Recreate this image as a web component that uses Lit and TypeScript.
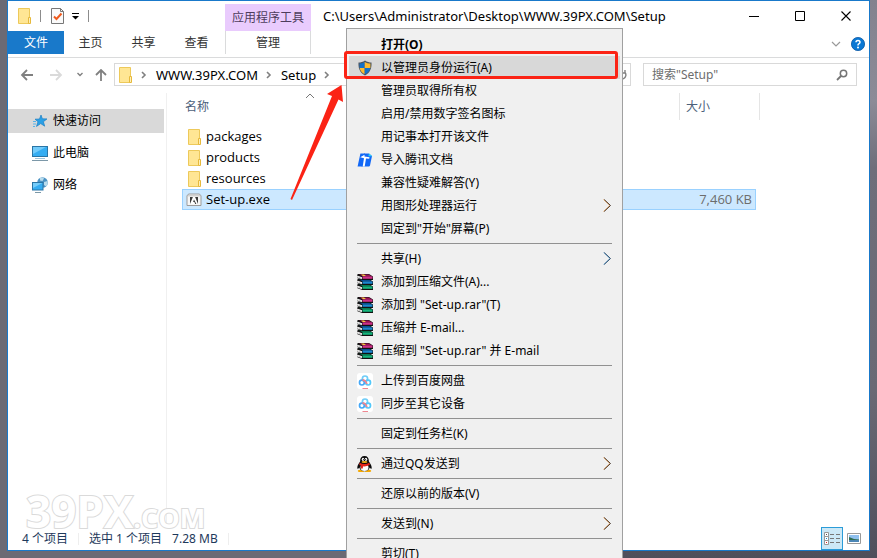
import { LitElement, html, svg, css, nothing, type TemplateResult } from "lit";
import { customElement } from "lit/decorators.js";
import { classMap } from "lit/directives/class-map.js";

const folder = html`<svg width="14" height="16" viewBox="0 0 14 16" aria-hidden="true">
  <path d="M.5.5h11v15H.5z" fill="#ffe694" stroke="#edc95a" />
  <path d="M10.500 9.500h2v6h-2z" fill="#fff0b8" stroke="#e6b93c" />
</svg>`;

const crumb = html`<svg class="crumb-sep" width="6" height="8" viewBox="0 0 6 8" aria-hidden="true">
  <path d="M1 1l3 3-3 3" fill="none" stroke="#808080" stroke-width="1.600" />
</svg>`;

const arrow = (edge: string, core: string) => html`<svg class="sub" width="9" height="14" viewBox="0 0 9 14" aria-hidden="true">
  <path d="M.5 .5L6.800 6.500l-6.300 6" fill="none" stroke=${edge} stroke-width=".8" />
  <path d="M1.200 .5L7.500 6.500l-6.300 6" fill="none" stroke=${core} stroke-width=".9" />
</svg>`;

const submenu = arrow("#e79a4c", "#3b2a20");
const submenuBlue = arrow("#6fa9d6", "#1f3f5f");

const shield = html`<svg width="16" height="16" viewBox="0 0 16 16" aria-hidden="true">
  <path d="M8 .5C10 2 12.500 2.600 14.500 2.600 14.800 8 13.500 12.500 8 15.500 2.500 12.500 1.200 8 1.500 2.600 3.500 2.600 6 2 8 .5z" fill="#4c5560" />
  <path d="M7.700 2C6 3 4.300 3.500 2.600 3.600V8h5.100z" fill="#1271c9" />
  <path d="M7.700 2c2 1 4 1.500 5.700 1.600V8H7.700z" fill="#fdbb2f" />
  <path d="M2.700 8h5v6.200c-3-1.700-4.600-3.600-5-6.200z" fill="#fdbb2f" />
  <path d="M13.300 8H7.700v6.200c3.600-1.700 5.200-3.600 5.600-6.200z" fill="#1271c9" />
</svg>`;

const docs = html`<svg width="16" height="16" viewBox="0 0 16 16" aria-hidden="true">
  <path d="M3.400 1.500H8L5.500 14.500H.6z" fill="#1268f6" />
  <path d="M7 1.500h5l3 2.500-2 9.500q-.2 1-1.200 1H4.600z" fill="#1268f6" />
  <path d="M12 1.500l3.200 2.800h-3.800z" fill="#27d7f5" />
  <path d="M3.200 5.300l4.300-2.500V4.500l5 .8-.3 1.500-3.200-.4-1.300 8.100H5.700l1.300-8.300z" fill="#fff" />
</svg>`;

const book = (y: number, dark: string, bright: string) => svg`<g transform="translate(0 ${y})">
  <path d="M1 0h11l4 2.500V6H5L0 4V1z" fill="#111" />
  <path d="M2 .4h9.800l3.200 2H6z" fill=${dark} />
  <path d="M5.500 2.400h10v2.400h-10z" fill=${bright} />
  <path d="M0 1.400l5 1.900v2L0 3.600z" fill="#fff" />
  <path d="M0 2.600l5 1.800" stroke="#777" stroke-width=".4" />
</g>`;

const rar = html`<svg width="16" height="16" viewBox="0 0 16 16" aria-hidden="true">
  ${book(10, "#067a52", "#14b57c")}${book(5, "#0a4f93", "#1a86cf")}${book(0, "#9c0f52", "#cf2f88")}
  <path d="M4 .500h3l2 1.500H6z" fill="#f2cd3c" />
</svg>`;

const cloud = html`<svg width="16" height="16" viewBox="0 0 16 16" aria-hidden="true">
  <rect width="16" height="16" rx="3" fill="#fff" />
  <circle cx="8" cy="5.600" r="2.600" fill="none" stroke="#6fcdf8" stroke-width="1.700" />
  <circle cx="4.900" cy="9.600" r="2.400" fill="none" stroke="#45a8f7" stroke-width="1.700" />
  <circle cx="11.100" cy="9.600" r="2.400" fill="none" stroke="#52c8fa" stroke-width="1.700" />
  <path d="M5.300 7.200Q8 6.300 10 11" fill="none" stroke="#f0848e" stroke-width="1.700" />
  <path d="M5.500 15.500h5.500" stroke="#ef8790" />
</svg>`;

const penguin = html`<svg width="16" height="16" viewBox="0 0 16 16" aria-hidden="true">
  <ellipse cx="4" cy="15" rx="3.200" ry="1.200" fill="#f5a800" /><ellipse cx="11" cy="15" rx="3.200" ry="1.200" fill="#f5a800" />
  <path d="M7.500 0C4.400 0 3 2.200 3.100 5.500 1.500 7.500-.3 10.800.5 12.800c.7.3 1.300-.8 1.800-1.300C3 14 5 15.300 7.500 15.300s4.500-1.300 5.200-3.800c.5.500 1.100 1.600 1.800 1.300.8-2-1-5.300-2.600-7.300C12 2.200 10.600 0 7.500 0z" fill="#0b0b0b" />
  <ellipse cx="7.500" cy="11.500" rx="4" ry="3.500" fill="#fff" />
  <path d="M2.600 6.800Q7.500 9.300 12.400 6.800l.4 2.200Q8.500 11 6 10.300l-.2 2.300-2-.2.200-2.700-1.700-.7z" fill="#e3231a" />
  <ellipse cx="6" cy="3.300" rx="1.200" ry="1.600" fill="#fff" /><ellipse cx="9" cy="3.300" rx="1.200" ry="1.600" fill="#fff" />
  <circle cx="6.400" cy="3.500" r=".5" /><circle cx="8.600" cy="3.500" r=".5" />
  <ellipse cx="7.500" cy="6" rx="3" ry=".9" fill="#f7b21a" />
</svg>`;

const adobe = html`<svg width="16" height="16" viewBox="0 0 16 16" aria-hidden="true">
  <path d="M2.500 2h11l1 1.500h.500v10h-14v-10h.500z" fill="#f6f6f6" stroke="#9b9b9b" />
  <path d="M1.500 3.800h13" stroke="#c4c4c4" /><rect x="4" y="5" width="8" height="7" fill="#3b3b3b" />
  <path d="M4 12L6.900 5h2.200l2.900 7h-1.600L8 7.600 7.100 10h1.300l.8 2z" fill="#fff" />
</svg>`;

const star = html`<svg width="16" height="16" viewBox="0 0 16 16" aria-hidden="true">
  <path d="M9 2l1.400 3.800 4.600.1-3.600 2.800 1.300 4.500-4-2.600-4.200 2.800 1.500-4.700L3 6.200l4.500-.2z" fill="#2aa0e6" stroke="#1d7fc4" stroke-width=".7" />
  <path d="M1 8.500h3M1 11h3M1 13.500h2" stroke="#57b4ea" />
</svg>`;

const pc = html`<svg width="16" height="16" viewBox="0 0 16 16" aria-hidden="true">
  <rect x=".5" y="1.500" width="15" height="10" fill="#35adf2" stroke="#2a75a5" />
  <path d="M1 2h13L1 9z" fill="#72cbfa" /><path d="M3 13.500h10" stroke="#9fc4da" /><path d="M0 15.500h16" stroke="#7c98a8" />
</svg>`;

const network = html`<svg width="16" height="16" viewBox="0 0 16 16" aria-hidden="true">
  <circle cx="10.500" cy="5.500" r="5.300" fill="#4c93c4" />
  <path d="M8 .9q3-1.200 4 .6L10.500 4 8 3.500zM12 5l3.500-1q.8 3-1.500 5.500L12 8z" fill="#b9dced" />
  <rect x=".5" y="5.500" width="10.500" height="7.500" fill="#35adf2" stroke="#2a75a5" />
  <path d="M1 6h9.500L1 11z" fill="#76cdfa" /><path d="M3 15.500h6" stroke="#7c98a8" />
</svg>`;

interface Item {
  label: string;
  icon?: TemplateResult;
  sub?: TemplateResult;
  bold?: boolean;
  active?: boolean;
}

const groups: Item[][] = [
  [
    { label: "打开(O)", bold: true },
    { label: "以管理员身份运行(A)", icon: shield, active: true },
    { label: "管理员取得所有权" },
    { label: "启用/禁用数字签名图标" },
    { label: "用记事本打开该文件" },
    { label: "导入腾讯文档", icon: docs },
    { label: "兼容性疑难解答(Y)" },
    { label: "用图形处理器运行", sub: submenu },
    { label: "固定到\"开始\"屏幕(P)" },
  ],
  [
    { label: "共享(H)", sub: submenuBlue },
    { label: "添加到压缩文件(A)...", icon: rar },
    { label: "添加到 \"Set-up.rar\"(T)", icon: rar },
    { label: "压缩并 E-mail...", icon: rar },
    { label: "压缩到 \"Set-up.rar\" 并 E-mail", icon: rar },
  ],
  [
    { label: "上传到百度网盘", icon: cloud },
    { label: "同步至其它设备", icon: cloud },
  ],
  [{ label: "固定到任务栏(K)" }],
  [{ label: "通过QQ发送到", icon: penguin, sub: submenu }],
  [{ label: "还原以前的版本(V)" }],
  [{ label: "发送到(N)", sub: submenu }],
  [{ label: "剪切(T)" }],
];

@customElement("context-menu")
class ContextMenu extends LitElement {
  static styles = css`
    :host {
      display: block;
      box-sizing: border-box;
      padding: 4px 2px;
      background: #f0f0f0;
      border: 1px solid #a0a0a0;
      font: 12px/16px "Noto Sans", "Noto Sans CJK SC", sans-serif;
    }
    svg { display: block; flex: none; }
    .item {
      display: flex;
      align-items: center;
      width: 100%;
      height: 23px;
      padding: 0 8px;
      border: 0;
      background: none;
      color: #000;
      font: inherit;
      text-align: left;
      white-space: nowrap;
    }
    .active { background: #d8d8d8; }
    .bold { font-weight: bold; }
    .icon { width: 24px; flex: none; }
    .label { flex: 1; }
    hr {
      height: 1px;
      margin: 3px 8px;
      border: 0;
      background: #919191;
    }
  `;

  render() {
    return html`<div role="menu">
      ${groups.map(
        (group, i) => html`${i ? html`<hr />` : nothing}${group.map(
          (it) => html`<button
            role="menuitem"
            class=${classMap({ item: true, active: !!it.active, bold: !!it.bold })}
          ><span class="icon">${it.icon ?? nothing}</span><span class="label">${it.label}</span>${it.sub ?? nothing}</button>`,
        )}`,
      )}
    </div>`;
  }
}

@customElement("app-root")
class AppRoot extends LitElement {
  static styles = css`
    :host {
      display: block;
      font: 12px/16px "Noto Sans", "Noto Sans CJK SC", sans-serif;
      color: #000;
    }
    * { box-sizing: border-box; }
    svg { display: block; flex: none; }
    button { padding: 0; border: 0; background: none; color: inherit; font: inherit; }
    .desktop {
      position: relative;
      display: flex;
      height: 100vh;
      padding: 0 7px 7px;
      overflow: hidden;
      background: linear-gradient(90deg, #6b6a74 0 50%, transparent 50%),
        linear-gradient(#83828e, #8c8b97 18%, #6f6e7a 30%, #6a6974 70%, #504f5b);
    }
    .window {
      display: flex;
      flex: 1;
      flex-direction: column;
      min-width: 0;
      background: #fff;
      border: 1px solid #1979ca;
    }
    .titlebar { display: flex; height: 30px; }
    .quick { display: flex; align-items: center; gap: 8px; width: 217px; padding-left: 10px; }
    .bar { width: 1px; height: 12px; background: #8c8c8c; }
    .tools {
      width: 86px;
      margin-top: 3px;
      background: #e9cbfd;
      color: #4d3d5c;
      line-height: 27px;
      text-align: center;
    }
    .title { flex: 1; min-width: 0; margin: 0; padding-left: 12px; overflow: hidden; font-size: 13px; font-weight: normal; line-height: 30px; white-space: nowrap; }
    .caption { display: grid; width: 46px; place-items: center; }
    .ribbon { display: flex; height: 27px; border-bottom: 1px solid #dadbdc; }
    .tab { width: 53px; height: 23px; color: #333; text-align: center; }
    .file { width: 56px; background: #1979ca; color: #fff; }
    .manage { width: 86px; margin-left: 2px; border: solid #dadbdc; border-width: 0 1px; }
    .ribbon-end { display: flex; align-items: center; gap: 10px; margin-left: auto; padding-right: 4px; }
    .nav { display: flex; align-items: center; padding: 5px 12px 6px; }
    .arrows { display: flex; align-items: center; width: 94px; }
    .arrows button { display: grid; place-items: center; width: 14px; }
    .back { margin-right: 15px; }
    .forward { margin-right: 10px; }
    .recent { margin-right: 7px; }
    .address { display: flex; flex: 1; align-items: center; height: 23px; padding-left: 4px; border: 1px solid #d9d9d9; font-size: 13px; }
    .crumb-sep { margin: 0 9px 0 8px; }
    .refresh { margin-left: auto; margin-right: 3px; }
    .search { display: flex; align-items: center; width: 214px; height: 23px; margin-left: 12px; padding: 0 8px; border: 1px solid #d9d9d9; }
    .search input { flex: 1; min-width: 0; padding: 0; border: 0; outline: 0; background: none; font: inherit; }
    .search input::placeholder { color: #6d6d6d; opacity: 1; }
    .body { display: flex; flex: 1; min-height: 0; padding-top: 1px; }
    .places { display: flex; flex-direction: column; gap: 8px; width: 156px; padding-top: 16px; }
    .place { display: flex; align-items: center; gap: 5px; height: 24px; padding-left: 24px; color: #000; text-decoration: none; }
    .current { background: #d9d9d9; }
    .content { flex: 1; min-width: 0; margin-left: 2px; padding-left: 15px; border-left: 1px solid #f0f0f0; }
    table { border-spacing: 0; table-layout: fixed; width: 578px; }
    .c-size { width: 77px; }
    .c-end { width: 4px; }
    th { height: 27px; padding: 0; color: #4c607a; font-weight: normal; text-align: left; }
    .th-name { padding-left: 3px; }
    .th-size { padding-left: 6px; border-left: 1px solid #e5e5e5; }
    .th-end { border-right: 1px solid #e5e5e5; }
    .space td { height: 6px; padding: 0; }
    td { height: 21px; padding: 0; font-family: "Open Sans", sans-serif; font-size: 13px; line-height: 17px; }
    .entry { display: flex; align-items: center; gap: 4px; padding-left: 6px; }
    .entry-exe { padding-left: 3px; }
    .selected td { background: #cce8ff; border: solid #99d1ff; border-width: 1px 0; }
    .selected .name { border-left-width: 1px; }
    .selected .size { padding-right: 3px; border-right-width: 1px; color: #6d6d6d; text-align: right; }
    .status { display: flex; align-items: center; height: 23px; padding-left: 14px; color: #1e395b; }
    .status .sep { width: 1px; height: 12px; margin: 0 10px; background: #eee; }
    .bytes { margin-left: 10px; }
    .views { display: flex; align-items: center; gap: 4px; margin-left: auto; padding-right: 8px; }
    .view-list { display: grid; place-items: center; width: 22px; height: 23px; background: #cce8f6; border: 1px solid #2b9cd8; }
    .menu { position: absolute; left: 346px; top: 28px; width: 277px; }
    .mark { position: absolute; left: 344px; top: 51px; width: 274px; height: 28px; border: 3px solid #fb2315; border-radius: 3px; }
    .pointer { position: absolute; left: 288px; top: 84px; }
    .sort { position: absolute; left: 305px; top: 93px; }
    .brand {
      position: absolute;
      left: 26px;
      top: 493px;
      color: #fff;
      font-family: "Open Sans", sans-serif;
      font-size: 44px;
      font-weight: bold;
      line-height: 36px;
      paint-order: stroke fill;
      -webkit-text-stroke: 2px #dadada;
    }
    .brand small { font-size: 27px; }
  `;

  render() {
    return html`<div class="desktop">
      <main class="window">
        <header class="titlebar">
          <div class="quick">
            ${folder}<span class="bar"></span>
            <svg width="15" height="18" viewBox="1 0 15 18" aria-hidden="true">
              <path d="M3.500 1.500h9l3 3v12h-12z" fill="#fafafa" stroke="#777" /><path d="M12.500 1.500v3h3" fill="none" stroke="#777" />
              <path d="M6 9.500l2.500 2.500 5-5.500" fill="none" stroke="#ef5a1d" stroke-width="2" />
            </svg>
            <svg width="8" height="8" viewBox="0 0 8 8" aria-hidden="true"><path d="M0 1.500h7" stroke="#000" /><path d="M0 4h7L3.500 7.500z" /></svg>
            <span class="bar"></span>
          </div>
          <div class="tools">应用程序工具</div>
          <h1 class="title">C:\\Users\\Administrator\\Desktop\\WWW.39PX.COM\\Setup</h1>
          <button class="caption" aria-label="最小化"><svg width="11" height="11"><path d="M0 5.500h10" stroke="#000" /></svg></button>
          <button class="caption" aria-label="最大化"><svg width="11" height="11"><path d="M.5.5h9v9h-9z" fill="none" stroke="#000" /></svg></button>
          <button class="caption" aria-label="关闭"><svg width="11" height="11"><path d="M.5.5l9 9M9.500.5l-9 9" stroke="#000" stroke-width="1.100" /></svg></button>
        </header>
        <nav class="ribbon">
          <button class="tab file">文件</button>
          <button class="tab">主页</button>
          <button class="tab">共享</button>
          <button class="tab">查看</button>
          <button class="tab manage">管理</button>
          <div class="ribbon-end">
            <button aria-label="展开功能区"><svg width="10" height="6"><path d="M1 1l4 4 4-4" fill="none" stroke="#999" stroke-width="1.200" /></svg></button>
            <button aria-label="帮助"><svg width="14" height="14" viewBox="0 0 14 14">
              <circle cx="7" cy="7" r="6.600" fill="#0a78d4" stroke="#0a58a4" stroke-width=".8" />
              <path d="M5 5.300Q5 3.400 7 3.400t2 1.800Q9 6.300 7.800 6.900 7 7.300 7 8.500" fill="none" stroke="#fff" stroke-width="1.500" /><circle cx="7" cy="10.500" r="1" fill="#fff" />
            </svg></button>
          </div>
        </nav>
        <div class="nav">
          <div class="arrows">
            <button class="back" aria-label="后退"><svg width="14" height="12"><path d="M7 1L2 6l5 5M2 6h11" fill="none" stroke="#808080" stroke-width="1.800" /></svg></button>
            <button class="forward" aria-label="前进"><svg width="14" height="12"><path d="M7 1l5 5-5 5M12 6H1" fill="none" stroke="#dadada" stroke-width="1.800" /></svg></button>
            <button class="recent" aria-label="最近浏览的位置"><svg width="8" height="6"><path d="M1.500 1L4 3.500 6.500 1" fill="none" stroke="#808080" stroke-width="1.400" /></svg></button>
            <button class="up" aria-label="上移"><svg width="14" height="12"><path d="M2 6l5-5 5 5M7 1v11" fill="none" stroke="#808080" stroke-width="1.800" /></svg></button>
          </div>
          <div class="address">
            ${folder}${crumb}<span>WWW.39PX.COM</span>${crumb}<span>Setup</span>${crumb}
            <svg class="refresh" width="10" height="12" aria-hidden="true"><path d="M5 2a4 4 0 1 0 3 1.500M8 1v3H5" fill="none" stroke="#808080" stroke-width="1.400" /></svg>
          </div>
          <label class="search">
            <input type="text" aria-label="搜索" placeholder='搜索"Setup"' />
            <svg width="12" height="12" aria-hidden="true"><circle cx="7.500" cy="4.500" r="3.200" fill="none" stroke="#757575" stroke-width="1.500" /><path d="M5 7L1 11" stroke="#757575" stroke-width="1.800" /></svg>
          </label>
        </div>
        <div class="body">
          <nav class="places">
            <a class="place current" href="#quick">${star}快速访问</a>
            <a class="place" href="#pc">${pc}此电脑</a>
            <a class="place" href="#network">${network}网络</a>
          </nav>
          <section class="content">
            <table>
              <colgroup><col /><col class="c-size" /><col class="c-end" /></colgroup>
              <thead>
                <tr><th class="th-name">名称</th><th class="th-size">大小</th><th class="th-end"></th></tr>
              </thead>
              <tbody>
                <tr class="space"><td colspan="3"></td></tr>
                ${["packages", "products", "resources"].map(
                  (name) => html`<tr><td><div class="entry">${folder}${name}</div></td><td></td></tr>`,
                )}
                <tr class="selected">
                  <td class="name"><div class="entry entry-exe">${adobe}Set-up.exe</div></td>
                  <td class="size">7,460 KB</td>
                </tr>
              </tbody>
            </table>
          </section>
        </div>
        <footer class="status">
          <span>4 个项目</span><span class="sep"></span><span>选中 1 个项目</span><span class="bytes">7.28 MB</span><span class="sep"></span>
          <div class="views">
            <button class="view-list" aria-label="详细信息"><svg width="16" height="14" viewBox="0 0 16 14">
              <path d="M.5.500h4v4h-4zM.5 4.500h4v4h-4zM.5 8.500h4v4h-4z" fill="#fff" stroke="#999" />
              <path d="M6 2.500h4M12 2.500h4M6 6.500h4M12 6.500h4M6 10.500h4M12 10.500h4" stroke="#777" />
              <path d="M2 2h1v1H2z" fill="#555" /><path d="M2 6h1v1H2z" fill="#1890d8" /><path d="M2 10h1v1H2z" fill="#d22" />
            </svg></button>
            <button aria-label="大缩略图"><svg width="14" height="11" viewBox="0 0 14 11">
              <path d="M.5.500h13v10H.5z" fill="#fff" stroke="#999" /><path d="M2 2h10v7H2z" fill="#8fc0ee" />
              <path d="M2 4l5 2 5 .5V7H2z" fill="#2e6b50" /><path d="M2 7h10v2H2z" fill="#4c86b5" />
            </svg></button>
          </div>
        </footer>
      </main>
      <div class="brand">39PX<small>.COM</small></div>
      <svg class="sort" width="10" height="6" aria-hidden="true"><path d="M1 5l4-4 4 4" fill="none" stroke="#777" /></svg>
      <context-menu class="menu"></context-menu>
      <div class="mark"></div>
      <svg class="pointer" width="58" height="118" viewBox="0 0 58 118" aria-hidden="true">
        <path d="M53.500 1L55 18l-4.500-2.500L4 116l-1.500-1L44 12l-5-2z" fill="#fb2315" />
      </svg>
    </div>`;
  }
}
